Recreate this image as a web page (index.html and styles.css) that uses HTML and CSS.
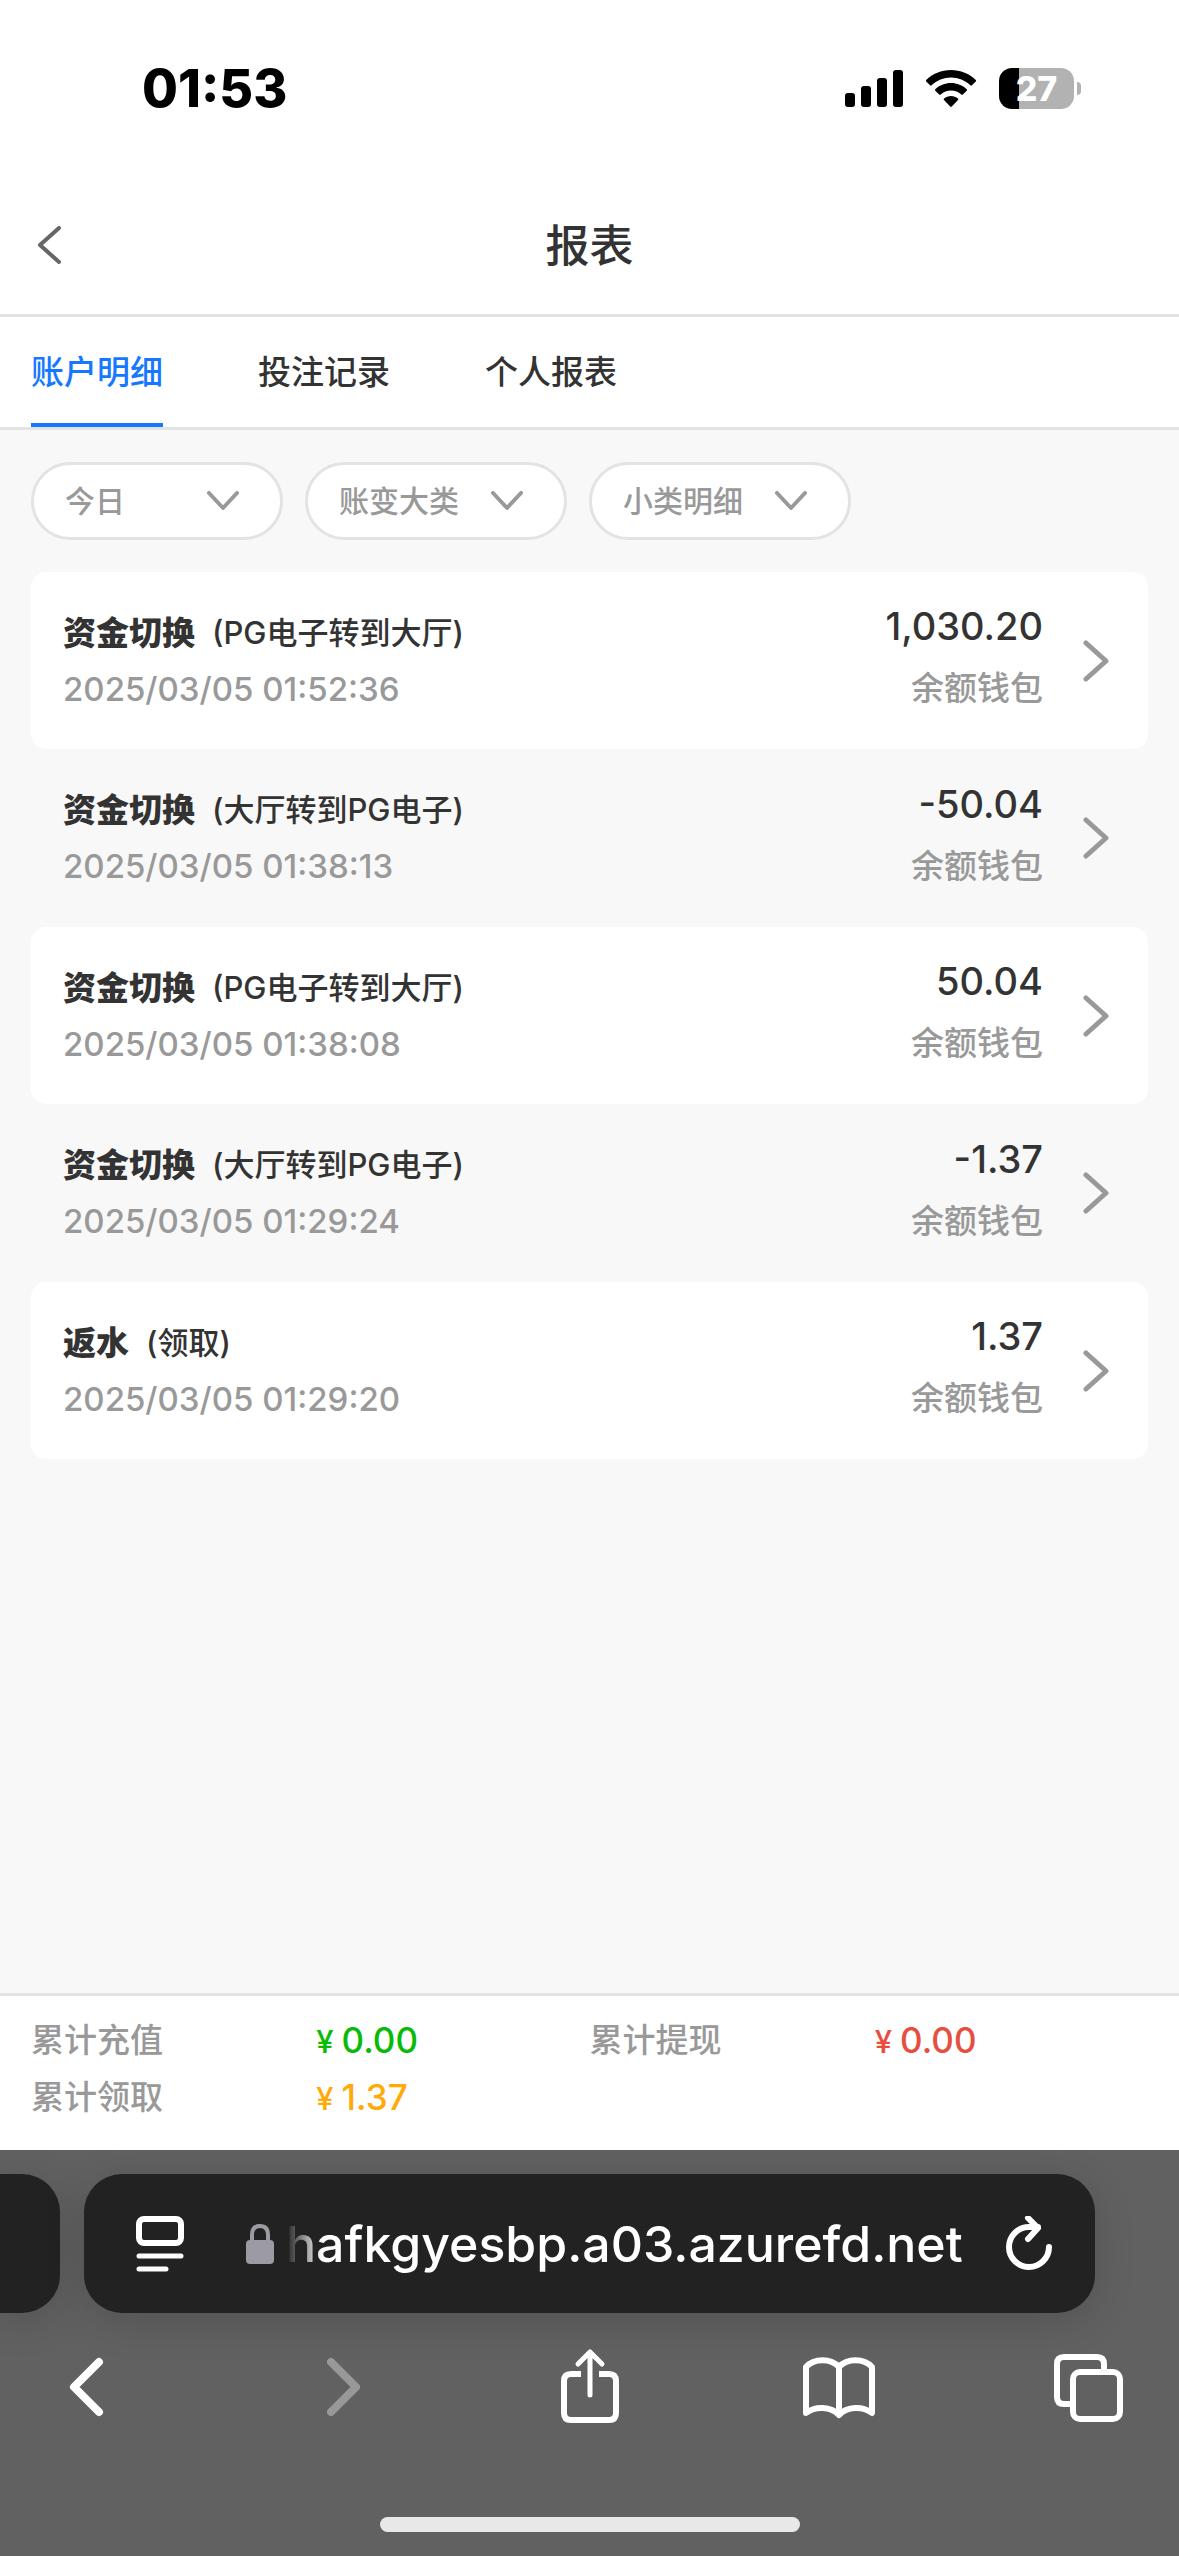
FILE: index.html
```
<!DOCTYPE html>
<html lang="zh-CN">
<head>
    <meta charset="UTF-8">
    <meta name="viewport" content="width=device-width, initial-scale=1.0">
    <title>报表</title>
    <link rel="stylesheet" href="styles.css">
</head>
<body>
    <div class="status-bar">
        <span class="time">01:53</span>
        <div class="status-icons">
            <svg class="signal" width="58" height="37" viewBox="0 0 58 37">
                <rect x="0" y="23" width="10" height="14" rx="3"/>
                <rect x="16" y="16" width="10" height="21" rx="3"/>
                <rect x="32" y="8" width="10" height="29" rx="3"/>
                <rect x="48" y="0" width="10" height="37" rx="3"/>
            </svg>
            <svg class="wifi" width="52" height="38" viewBox="0 0 52 38">
                <path d="M26 0C35.500 0 44.500 3.800 50.800 10C51.300 10.500 51.300 11 50.800 11.500L46.900 15.300C46.400 15.800 45.900 15.800 45.400 15.300C40.200 10.300 33.300 7.500 26 7.500S11.800 10.300 6.600 15.300C6.100 15.800 5.600 15.800 5.100 15.300L1.200 11.500C.7 11 .7 10.500 1.200 10C7.500 3.800 16.500 0 26 0Z"/>
                <path d="M26 13C32 13 37.500 15.300 41.700 19.200C42.200 19.700 42.200 20.200 41.700 20.700L37.800 24.500C37.300 25 36.800 25 36.300 24.500C33.500 22 29.900 20.500 26 20.500S18.500 22 15.700 24.500C15.200 25 14.700 25 14.200 24.500L10.300 20.700C9.800 20.200 9.800 19.700 10.300 19.200C14.500 15.300 20 13 26 13Z"/>
                <path d="M26 26C28.700 26 31 26.900 33 28.500C33.500 29 33.500 29.500 33 30L26.800 36.600C26.300 37.200 25.700 37.200 25.200 36.600L19 30C18.500 29.500 18.500 29 19 28.500C21 26.900 23.300 26 26 26Z"/>
            </svg>
            <div class="battery">
                <span class="battery-body">27</span>
                <span class="battery-tip"></span>
            </div>
        </div>
    </div>

    <header class="header">
        <button class="back" aria-label="返回">
            <svg width="26" height="40" viewBox="0 0 26 40"><path d="M23 2L4 19L23 36"/></svg>
        </button>
        <h1>报表</h1>
    </header>

    <nav class="tabs">
        <a href="#" class="tab active">账户明细</a>
        <a href="#" class="tab">投注记录</a>
        <a href="#" class="tab">个人报表</a>
    </nav>

    <main class="content">
        <div class="filters">
            <div class="filter filter-day">
                <select aria-label="日期"><option>今日</option></select>
                <svg width="32" height="20" viewBox="0 0 32 20"><path d="M2 2L16 17L30 2"/></svg>
            </div>
            <div class="filter">
                <select aria-label="账变大类"><option>账变大类</option></select>
                <svg width="32" height="20" viewBox="0 0 32 20"><path d="M2 2L16 17L30 2"/></svg>
            </div>
            <div class="filter">
                <select aria-label="小类明细"><option>小类明细</option></select>
                <svg width="32" height="20" viewBox="0 0 32 20"><path d="M2 2L16 17L30 2"/></svg>
            </div>
        </div>

        <ul class="records">
            <li>
                <a href="#" class="record">
                    <div class="info">
                        <p class="title"><b>资金切换</b><span>(PG电子转到大厅)</span></p>
                        <p class="date">2025/03/05 01:52:36</p>
                    </div>
                    <div class="money">
                        <p class="amount">1,030.20</p>
                        <p class="wallet">余额钱包</p>
                    </div>
                    <svg class="arrow" width="26" height="42" viewBox="0 0 26 42"><path d="M3 3L23 21L3 39"/></svg>
                </a>
            </li>
            <li>
                <a href="#" class="record">
                    <div class="info">
                        <p class="title"><b>资金切换</b><span>(大厅转到PG电子)</span></p>
                        <p class="date">2025/03/05 01:38:13</p>
                    </div>
                    <div class="money">
                        <p class="amount">-50.04</p>
                        <p class="wallet">余额钱包</p>
                    </div>
                    <svg class="arrow" width="26" height="42" viewBox="0 0 26 42"><path d="M3 3L23 21L3 39"/></svg>
                </a>
            </li>
            <li>
                <a href="#" class="record">
                    <div class="info">
                        <p class="title"><b>资金切换</b><span>(PG电子转到大厅)</span></p>
                        <p class="date">2025/03/05 01:38:08</p>
                    </div>
                    <div class="money">
                        <p class="amount">50.04</p>
                        <p class="wallet">余额钱包</p>
                    </div>
                    <svg class="arrow" width="26" height="42" viewBox="0 0 26 42"><path d="M3 3L23 21L3 39"/></svg>
                </a>
            </li>
            <li>
                <a href="#" class="record">
                    <div class="info">
                        <p class="title"><b>资金切换</b><span>(大厅转到PG电子)</span></p>
                        <p class="date">2025/03/05 01:29:24</p>
                    </div>
                    <div class="money">
                        <p class="amount">-1.37</p>
                        <p class="wallet">余额钱包</p>
                    </div>
                    <svg class="arrow" width="26" height="42" viewBox="0 0 26 42"><path d="M3 3L23 21L3 39"/></svg>
                </a>
            </li>
            <li>
                <a href="#" class="record">
                    <div class="info">
                        <p class="title"><b>返水</b><span>(领取)</span></p>
                        <p class="date">2025/03/05 01:29:20</p>
                    </div>
                    <div class="money">
                        <p class="amount">1.37</p>
                        <p class="wallet">余额钱包</p>
                    </div>
                    <svg class="arrow" width="26" height="42" viewBox="0 0 26 42"><path d="M3 3L23 21L3 39"/></svg>
                </a>
            </li>
        </ul>
    </main>

    <section class="totals">
        <span>累计充值</span><span class="sum green"><small>¥</small>0.00</span>
        <span>累计提现</span><span class="sum red"><small>¥</small>0.00</span>
        <span>累计领取</span><span class="sum orange"><small>¥</small>1.37</span>
    </section>

    <footer class="browser">
        <div class="address-row">
            <div class="prev-tab"></div>
            <div class="address-bar">
                <button aria-label="页面菜单">
                    <svg width="48" height="56" viewBox="0 0 48 56">
                        <rect x="3" y="3" width="42" height="24" rx="5"/>
                        <path d="M3 40H45M3 53H30" stroke-width="5"/>
                    </svg>
                </button>
                <svg class="lock" width="28" height="40" viewBox="0 0 28 40">
                    <rect x="0" y="16" width="28" height="24" rx="4"/>
                    <path d="M6 18V11C6 5 9 2 14 2S22 5 22 11V18"/>
                </svg>
                <input type="text" class="url" aria-label="网址" value="hafkgyesbp.a03.azurefd.net" readonly>
                <button aria-label="刷新">
                    <svg width="46" height="56" viewBox="0 0 46 56">
                        <path d="M43 31C43 42 34 51 23 51S3 42 3 31S12 11 23 11H32"/>
                        <path d="M22 2L32 12L22 23"/>
                    </svg>
                </button>
            </div>
        </div>
        <div class="toolbar">
            <button aria-label="后退">
                <svg width="80" height="80" viewBox="0 0 80 80"><path d="M49 15L24 40L49 65"/></svg>
            </button>
            <button aria-label="前进" disabled>
                <svg width="80" height="80" viewBox="0 0 80 80"><path d="M31 15L56 40L31 65"/></svg>
            </button>
            <button aria-label="分享">
                <svg width="80" height="80" viewBox="0 0 80 80">
                    <path d="M31 27H21Q14 27 14 34V66Q14 73 21 73H59Q66 73 66 66V34Q66 27 59 27H49" stroke-linecap="butt"/>
                    <path d="M40 48V6M28 17L40 5L52 17" stroke-width="5"/>
                </svg>
            </button>
            <button aria-label="书签">
                <svg width="80" height="80" viewBox="0 0 80 80">
                    <path d="M40 20C32 11 15 11 7 20V66C16 59 32 59 40 68C48 59 64 59 73 66V20C65 11 48 11 40 20ZM40 20V67"/>
                </svg>
            </button>
            <button aria-label="标签页">
                <svg width="80" height="80" viewBox="0 0 80 80">
                    <rect x="24" y="25" width="47" height="47" rx="7"/>
                    <path d="M24 57H15Q8 57 8 50V17Q8 10 15 10H48Q55 10 55 17V25" stroke-linecap="butt"/>
                </svg>
            </button>
        </div>
        <div class="home-indicator"></div>
    </footer>
</body>
</html>
```
FILE: styles.css
```
* {
    box-sizing: border-box;
}
body {
    display: flex;
    flex-direction: column;
    min-height: 100vh;
    margin: 0;
    font-family: Inter, "Noto Sans CJK SC", sans-serif;
    font-weight: 500;
    color: #333;
    background-color: #f8f8f8;
}
h1, p, ul {
    margin: 0;
    padding: 0;
}
ul {
    list-style: none;
}
a {
    color: inherit;
    text-decoration: none;
}
button {
    display: flex;
    padding: 0;
    border: none;
    background: none;
    cursor: pointer;
}
svg {
    flex: none;
}

/* Status bar */
.status-bar {
    display: flex;
    align-items: center;
    justify-content: space-between;
    height: 177px;
    padding: 0 98px 0 142px;
    background-color: #fff;
    color: #000;
}
.time {
    font-size: 52px;
    line-height: 60px;
    font-weight: 800;
}
.status-icons {
    display: flex;
    align-items: center;
    gap: 22px;
}
.battery {
    display: flex;
    align-items: center;
    gap: 3px;
}
.battery-body {
    width: 75px;
    border-radius: 13px;
    background: linear-gradient(to right, #000 20px, #b2b2b2 20px);
    color: #fff;
    font-size: 34px;
    line-height: 41px;
    font-weight: 800;
    text-align: center;
}
.battery-tip {
    width: 4px;
    height: 13px;
    border-radius: 0 6px 6px 0;
    background-color: #b2b2b2;
}

/* Header */
.header {
    display: grid;
    grid-template-columns: 60px 1fr 60px;
    align-items: center;
    height: 140px;
    padding: 0 36px;
    border-bottom: 3px solid #e3e3e3;
    background-color: #fff;
}
.back svg {
    fill: none;
    stroke: #666;
    stroke-width: 4;
    stroke-linecap: round;
    stroke-linejoin: round;
}
h1 {
    font-size: 44px;
    line-height: 60px;
    font-weight: 500;
    text-align: center;
}

/* Tabs */
.tabs {
    display: flex;
    gap: 95px;
    padding: 0 31px;
    border-bottom: 3px solid #e3e3e3;
    background-color: #fff;
}
.tab {
    padding-top: 4px;
    border-bottom: 4px solid transparent;
    font-size: 33px;
    line-height: 102px;
}
.tab.active {
    color: #1678ff;
    border-color: #1678ff;
}

/* Filters */
.content {
    flex: 1;
    padding: 32px 31px;
}
.filters {
    display: flex;
    gap: 22px;
    margin-bottom: 32px;
}
.filter {
    display: grid;
    align-items: center;
    width: 262px;
    height: 78px;
}
.filter-day {
    width: 252px;
}
.filter select,
.filter svg {
    grid-area: 1 / 1;
}
.filter select {
    width: 100%;
    height: 100%;
    padding: 0 31px;
    border: 3px solid #e3e3e3;
    border-radius: 39px;
    appearance: none;
    background-color: #fff;
    color: #999;
    font: inherit;
    font-size: 30px;
}
.filter svg {
    justify-self: end;
    margin-right: 44px;
    pointer-events: none;
    fill: none;
    stroke: #999;
    stroke-width: 4;
    stroke-linecap: round;
    stroke-linejoin: round;
}

/* Records */
.record {
    display: flex;
    align-items: center;
    height: 177px;
    padding: 0 39px 0 32px;
    border-radius: 15px;
    background-color: #fff;
}
.records li:nth-child(even) .record {
    height: 178px;
    background: none;
}
.info {
    flex: 1;
}
.title,
.date {
    line-height: 56px;
}
.title {
    display: flex;
    gap: 17px;
    font-size: 31px;
}
.title b {
    font-size: 33px;
    font-weight: 900;
}
.date {
    color: #999;
    font-size: 33px;
}
.money {
    padding-bottom: 7px;
    margin-right: 40px;
    text-align: right;
    line-height: 62px;
}
.amount {
    font-size: 38px;
}
.wallet {
    color: #999;
    font-size: 33px;
}
.arrow {
    fill: none;
    stroke: #999;
    stroke-width: 5;
    stroke-linecap: round;
    stroke-linejoin: round;
}

/* Totals */
.totals {
    display: grid;
    grid-template-columns: repeat(4, 1fr);
    padding: 16px 31px 24px;
    border-top: 3px solid #e3e3e3;
    background-color: #fff;
    color: #999;
    font-size: 33px;
    line-height: 57px;
}
.sum {
    display: flex;
    align-items: baseline;
    gap: 8px;
    padding-left: 6px;
    font-size: 35px;
}
.sum small {
    font-size: 31px;
    line-height: 40px;
}
.green {
    color: #09bb07;
}
.red {
    color: #e64f40;
}
.orange {
    color: #ffaa09;
}

/* Browser bars */
.browser {
    background-color: #616161;
}
.address-row {
    display: flex;
    gap: 24px;
    padding: 24px 84px 0 0;
}
.prev-tab,
.address-bar {
    height: 139px;
    background-color: #222;
    box-shadow: 0 8px 40px rgba(0, 0, 0, .15);
}
.prev-tab {
    flex: none;
    width: 60px;
    border-radius: 0 38px 38px 0;
}
.address-bar {
    flex: 1;
    display: flex;
    align-items: center;
    min-width: 0;
    padding: 0 43px 0 52px;
    border-radius: 38px;
}
.address-bar button svg,
.toolbar svg {
    fill: none;
    stroke: #fff;
    stroke-linecap: round;
    stroke-linejoin: round;
}
.address-bar button svg {
    stroke-width: 6;
}
.lock {
    margin: 0 12px 0 62px;
    fill: #9c9ba3;
}
.lock path {
    fill: none;
    stroke: #9c9ba3;
    stroke-width: 4;
}
.url {
    flex: 1;
    min-width: 0;
    margin-right: 44px;
    padding: 0;
    border: none;
    outline: none;
    background: none;
    color: #fff;
    font: inherit;
    font-size: 50px;
    text-align: right;
    mask-image: linear-gradient(to right, transparent, #000 36px);
}
.toolbar {
    display: flex;
    justify-content: space-between;
    padding: 34px 50px;
}
.toolbar svg {
    stroke-width: 6;
}
.toolbar button:disabled {
    opacity: .35;
}
.toolbar button:first-child svg,
.toolbar button:disabled svg {
    stroke-width: 8;
}
.home-indicator {
    width: 420px;
    height: 15px;
    margin: 56px auto 24px;
    border-radius: 8px;
    background-color: #e8e8e8;
}
```
